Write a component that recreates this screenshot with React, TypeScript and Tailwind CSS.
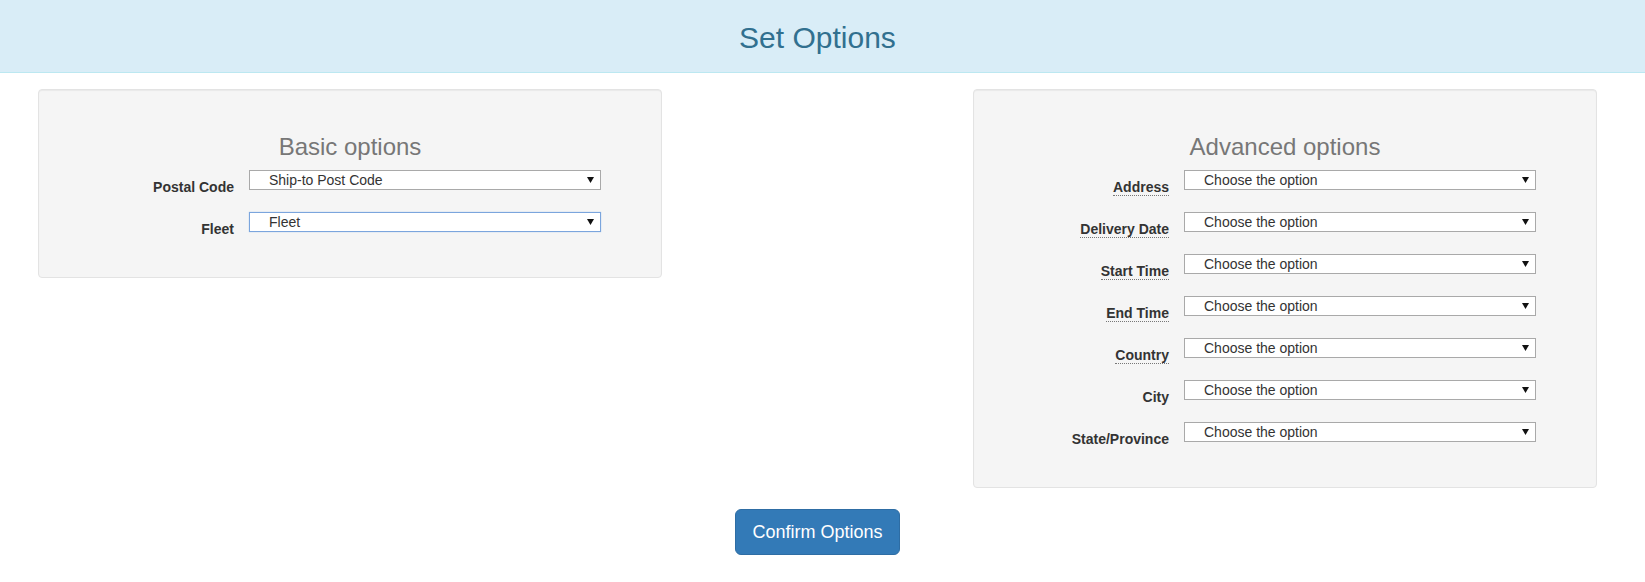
import React from "react";

type Row = { label: string; value: string; abbr?: boolean; focused?: boolean };

function Arrow() {
  return (
    <svg width="7" height="6" viewBox="0 0 7 6" className="ml-auto mr-[6px] shrink-0">
      <polygon points="0,0 7,0 3.5,6" fill="#111" />
    </svg>
  );
}

function FakeSelect({ value, focused }: { value: string; focused?: boolean }) {
  return (
    <div
      className={
        focused
          ? "flex h-[20px] w-[352px] items-center border border-[#7ba5dd] bg-white pl-[19px] text-[14px] leading-[16px] text-[#333] shadow-[0_0_1px_#9fc0ea]"
          : "flex h-[20px] w-[352px] items-center border border-[#a9a9a9] bg-white pl-[19px] text-[14px] leading-[16px] text-[#333]"
      }
    >
      <span>{value}</span>
      <Arrow />
    </div>
  );
}

function Panel({ title, rows }: { title: string; rows: Row[] }) {
  return (
    <div className="w-[624px] rounded-[4px] border border-[#e3e3e3] bg-[#f5f5f5] pb-[23px] pt-[44px] shadow-[inset_0_1px_1px_rgba(0,0,0,0.05)]">
      <h3 className="mb-[10px] text-center text-[24px] leading-[26px] text-[#777]">{title}</h3>
      {rows.map((r) => (
        <div key={r.label} className="mb-[15px] flex h-[27px] items-start">
          <div className="w-[195px] pt-[7px] text-right text-[14px] font-bold leading-[20px] text-[#333]">
            {r.abbr ? (
              <span className="border-b border-dotted border-[#777]">{r.label}</span>
            ) : (
              <span>{r.label}</span>
            )}
          </div>
          <div className="ml-[15px]">
            <FakeSelect value={r.value} focused={r.focused} />
          </div>
        </div>
      ))}
    </div>
  );
}

export default function App() {
  const basic: Row[] = [
    { label: "Postal Code", value: "Ship-to Post Code" },
    { label: "Fleet", value: "Fleet", focused: true },
  ];
  const choose = "Choose the option";
  const advanced: Row[] = [
    { label: "Address", value: choose, abbr: true },
    { label: "Delivery Date", value: choose, abbr: true },
    { label: "Start Time", value: choose, abbr: true },
    { label: "End Time", value: choose, abbr: true },
    { label: "Country", value: choose, abbr: true },
    { label: "City", value: choose },
    { label: "State/Province", value: choose },
  ];
  return (
    <div className="min-h-[582px] bg-white font-['Liberation_Sans',Arial,sans-serif] text-[#333]">
      <header className="flex h-[73px] items-center justify-center border-b border-[#bce8f1] bg-[#d9edf7] pl-[38px] pr-[48px]">
        <h1 className="pt-[2px] text-[30px] font-normal leading-[33px] text-[#31708f]">Set Options</h1>
      </header>
      <main className="pl-[38px] pr-[48px] pt-[16px]">
        <div className="flex items-start justify-between">
          <Panel title="Basic options" rows={basic} />
          <Panel title="Advanced options" rows={advanced} />
        </div>
        <div className="mt-[21px] flex justify-center">
          <button className="rounded-[6px] border border-[#2e6da4] bg-[#337ab7] px-[16px] py-[10px] text-[18px] leading-[24px] text-white">
            Confirm Options
          </button>
        </div>
      </main>
    </div>
  );
}
